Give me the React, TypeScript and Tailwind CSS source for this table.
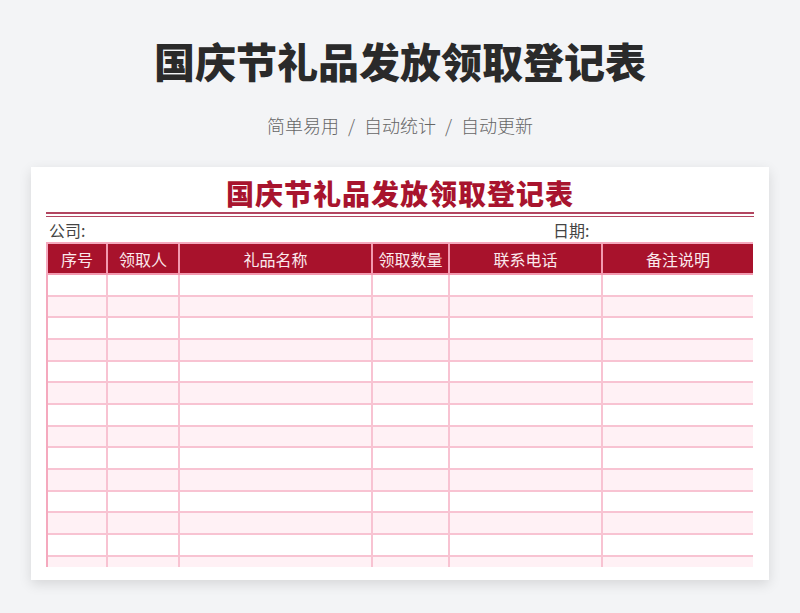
const columns = [
  { label: "序号" },
  { label: "领取人" },
  { label: "礼品名称" },
  { label: "领取数量" },
  { label: "联系电话" },
  { label: "备注说明" },
];

const rows = Array.from({ length: 14 }, (_, i) => i);

export default function App() {
  return (
    <div
      className="min-h-[613px] bg-[#f3f4f6] pt-[38px] pb-[32px]"
      style={{ fontFamily: '"Noto Sans CJK SC", "Noto Sans", sans-serif' }}
    >
      {/* Header */}
      <h1 className="text-center text-[41px] leading-[44px] font-black text-[#2a2a2a]">
        国庆节礼品发放领取登记表
      </h1>
      <p className="mt-[31px] flex justify-center items-center text-[18px] leading-[24px] font-light text-[#666666]">
        <span>简单易用</span>
        <span className="px-[9px]">/</span>
        <span>自动统计</span>
        <span className="px-[9px]">/</span>
        <span>自动更新</span>
      </p>

      {/* Sheet card */}
      <div className="mt-[30px] ml-[31px] w-[738px] bg-white shadow-[0_4px_12px_rgba(0,0,0,0.12)] px-[15px] pt-[9px] pb-[13px]">
        <h2 className="text-center text-[28px] leading-[34px] font-black tracking-[1px] text-[#a8142e]">
          国庆节礼品发放领取登记表
        </h2>
        <div className="mt-[2px] h-[2px] bg-[#b24660]" />
        <div className="mt-[2px] h-px bg-[#b24660]" />

        <div className="flex justify-between items-center h-[25px] text-[16px] text-[#444444]">
          <span className="pl-[3px]">公司:</span>
          <span className="w-[201px]">日期:</span>
        </div>

        <div className="h-[325px] w-[707px] overflow-hidden">
          <div className="grid grid-cols-[60px_72px_193px_77px_153px_152px] border-t-2 border-l-2 border-[#f5a9be]">
            {columns.map((c) => (
              <div
                key={c.label}
                className="h-[31px] flex items-center justify-center bg-[#a8122c] border-r-2 border-b-2 border-[#f29ab0] text-[16px] text-[#fbe9ed]"
              >
                {c.label}
              </div>
            ))}
            {rows.map((r) =>
              columns.map((c) => (
                <div
                  key={`${r}-${c.label}`}
                  className={`h-[21.67px] border-r-2 border-b-2 border-[#f8c3d2] ${
                    r % 2 === 1 ? "bg-[#fff1f5]" : "bg-white"
                  }`}
                />
              ))
            )}
          </div>
        </div>
      </div>
    </div>
  );
}
